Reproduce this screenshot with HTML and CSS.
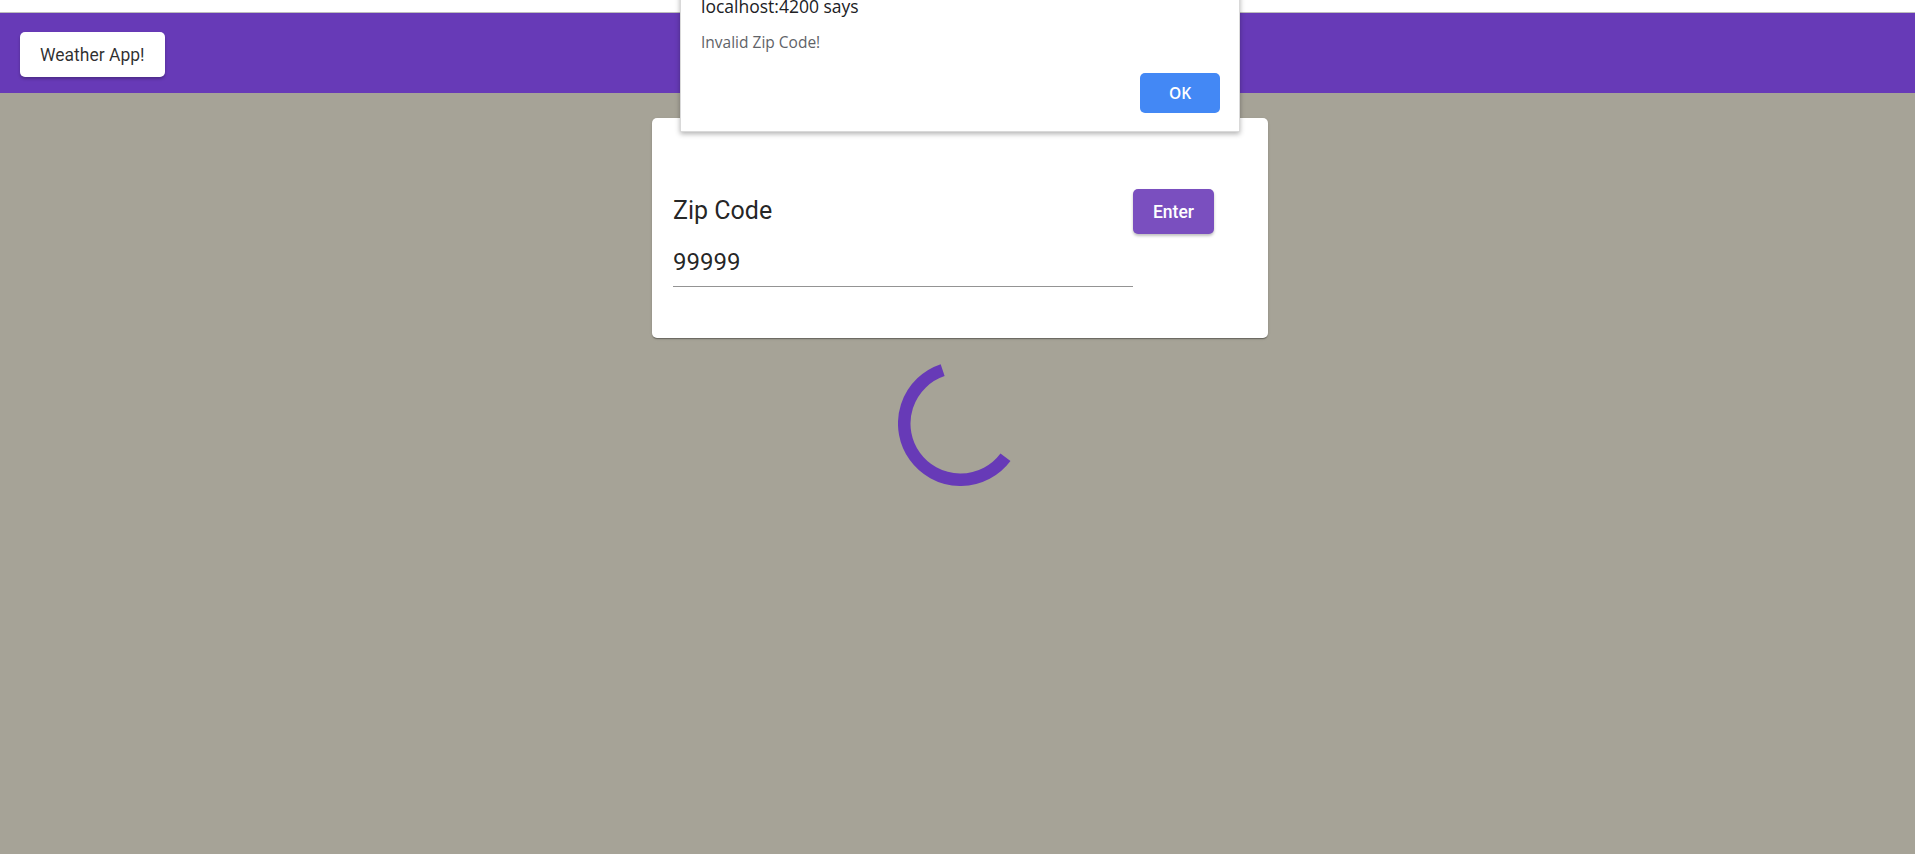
FILE: index.html
```html
<!DOCTYPE html>
<html>
<head>
<meta charset="utf-8">
<title>Weather App</title>
<link rel="stylesheet" href="styles.css">
</head>
<body>
<div class="browser-strip"></div>
<header class="toolbar">
  <button class="app-btn">Weather App!</button>
</header>
<main class="main">
  <section class="card">
    <div class="form-row">
      <div class="field">
        <label class="field-label">Zip Code</label>
        <div class="field-value">99999</div>
      </div>
      <button class="enter-btn">Enter</button>
    </div>
  </section>
  <div class="spinner-wrap">
    <svg class="spinner" width="125" height="125" viewBox="0 0 125 125">
      <path d="M107.48 96.27 A56.25 56.25 0 1 1 44.65 9.16" fill="none" stroke="#673ab7" stroke-width="12.5" stroke-linecap="butt"/>
    </svg>
  </div>
</main>
<div class="dialog">
  <div class="dialog-title">localhost:4200 says</div>
  <div class="dialog-msg">Invalid Zip Code!</div>
  <div class="dialog-actions">
    <button class="ok-btn">OK</button>
  </div>
</div>
</body>
</html>
```

FILE: styles.css
```css
html, body {
  margin: 0;
  padding: 0;
}
body {
  background: #a6a397;
  min-height: 854px;
  font-family: Roboto, "Liberation Sans", sans-serif;
  position: relative;
  overflow: hidden;
}
.browser-strip {
  height: 12px;
  background: #ffffff;
  border-bottom: 1px solid #bdbdbd;
}
.toolbar {
  height: 80px;
  background: #673ab7;
  box-sizing: border-box;
  padding: 19px 20px 0;
  display: flex;
  align-items: flex-start;
}
.app-btn {
  height: 45px;
  padding: 0 20px;
  border: none;
  border-radius: 5px;
  background: #ffffff;
  color: rgba(0, 0, 0, 0.82);
  font-family: Roboto, sans-serif;
  font-size: 17.5px;
  font-weight: 400;
  box-shadow: 0 2px 3px rgba(0, 0, 0, 0.25);
}
.main {
  padding: 25px 0 0 5px;
  display: flex;
  flex-direction: column;
  align-items: center;
}
.card {
  width: 616px;
  height: 220px;
  box-sizing: border-box;
  background: #ffffff;
  border-radius: 5px;
  padding: 71px 21px 0;
  box-shadow: 0 2px 1px -1px rgba(0,0,0,.2), 0 1px 1px 0 rgba(0,0,0,.14), 0 1px 3px 0 rgba(0,0,0,.12);
}
.form-row {
  display: flex;
  align-items: flex-start;
}
.field {
  width: 460px;
  padding-top: 6.5px;
}
.field-label {
  display: block;
  font-size: 25px;
  line-height: 30px;
  color: rgba(0, 0, 0, 0.87);
}
.field-value {
  margin-top: 21.5px;
  font-size: 24px;
  line-height: 30px;
  color: rgba(0, 0, 0, 0.87);
  padding-bottom: 9px;
  border-bottom: 1px solid #949494;
}
.enter-btn {
  width: 81px;
  height: 45px;
  border: none;
  border-radius: 5px;
  background: #7a4fbf;
  color: #ffffff;
  font-family: Roboto, sans-serif;
  font-size: 17.5px;
  font-weight: 500;
  padding: 0;
  box-shadow: 0 2px 3px rgba(0, 0, 0, 0.25);
}
.spinner-wrap {
  margin-top: 23px;
  display: flex;
  justify-content: center;
}
.spinner {
  display: block;
}
.dialog {
  position: absolute;
  left: 680px;
  top: -20px;
  width: 560px;
  box-sizing: border-box;
  background: #ffffff;
  border: 1px solid rgba(0, 0, 0, 0.15);
  border-top: none;
  padding: 14.5px 19px 18px 20px;
  box-shadow: 0 2px 5px rgba(0, 0, 0, 0.3);
  font-family: "Open Sans", "Noto Sans", sans-serif;
}
.dialog-title {
  font-size: 17.5px;
  line-height: 22px;
  color: #202124;
}
.dialog-msg {
  margin-top: 15px;
  font-size: 15.5px;
  line-height: 20px;
  color: #5f6368;
}
.dialog-actions {
  margin-top: 21.5px;
  display: flex;
  justify-content: flex-end;
}
.ok-btn {
  width: 80px;
  height: 40px;
  border: none;
  border-radius: 5px;
  background: #4388f5;
  color: #ffffff;
  font-family: "Open Sans", "Noto Sans", sans-serif;
  font-size: 15.5px;
  font-weight: 600;
  padding: 0;
}
```
